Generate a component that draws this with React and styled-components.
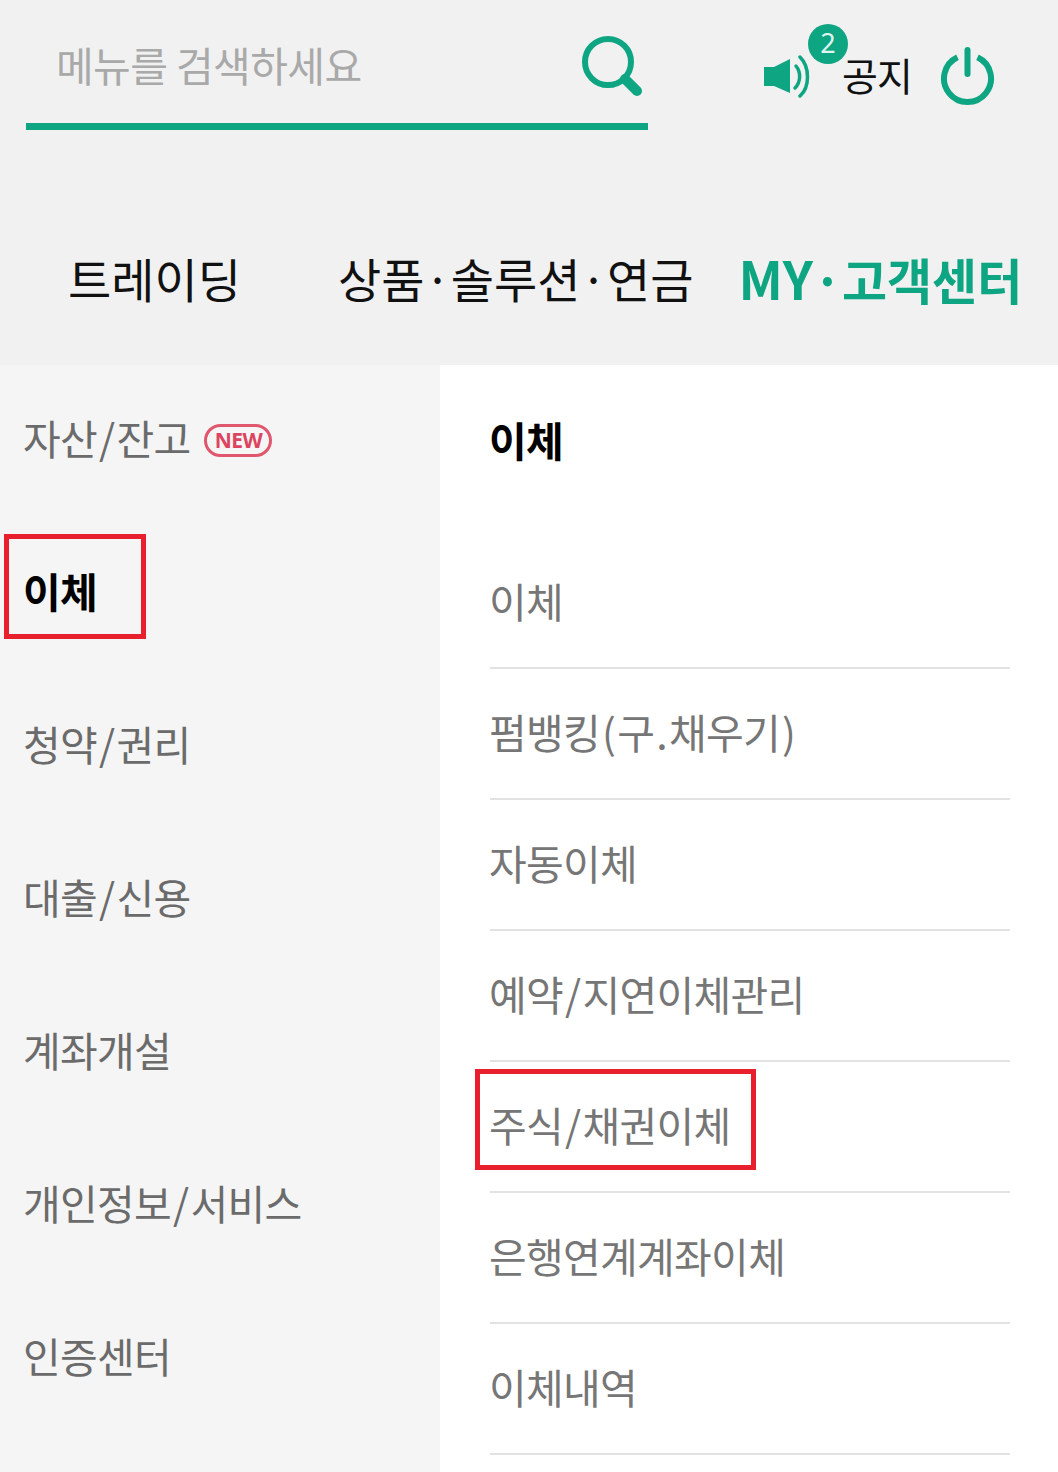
import React from "react";
import styled, { createGlobalStyle } from "styled-components";

const green = "#0ea583";

const Global = createGlobalStyle`
  html, body { margin: 0; padding: 0; background: #fff; }
  body { font-family: "Noto Sans CJK KR", "Noto Sans", sans-serif; overflow: hidden; }
`;
const Page = styled.div`
  width: 1058px; height: 1472px; overflow: hidden; display: flex; flex-direction: column;
`;
const Header = styled.header`
  height: 365px; flex: none; background: #f1f1f1; display: flex; flex-direction: column;
`;
const TopRow = styled.div`
  display: flex; align-items: flex-start; height: 130px; padding-left: 26px;
`;
const SearchBar = styled.div`
  width: 622px; height: 130px; box-sizing: border-box; border-bottom: 7px solid ${green};
  display: flex; align-items: flex-start; justify-content: space-between; padding: 34px 3px 0 30px;
`;
const SearchText = styled.span`
  font-size: 41px; line-height: 60px; letter-spacing: -0.6px; color: #a9a9a9;
`;
const NoticeArea = styled.div`
  display: flex; align-items: flex-start; margin-left: 115px; padding-top: 24px; position: relative;
`;
const Speaker = styled.div`
  position: relative; width: 79px; height: 76px;
`;
const Badge = styled.span`
  position: absolute; left: 45px; top: 0; width: 40px; height: 40px; border-radius: 50%;
  background: ${green}; color: #dff5ef; font-size: 27px; line-height: 38px; text-align: center;
  font-family: "Noto Sans", sans-serif;
`;
const NoticeLabel = styled.span`
  font-size: 39px; line-height: 58px; margin-top: 21px; color: #111; letter-spacing: -1px;
`;
const PowerWrap = styled.div`
  margin-left: 28px; margin-top: 23px; height: 60px;
`;
const Tabs = styled.nav`
  display: flex; align-items: center; margin-top: 111px; height: 74px;
`;
const Tab = styled.span`
  font-size: ${p => p.$size || 47}px; line-height: 74px; white-space: nowrap; flex: none;
  color: ${p => (p.$active ? green : "#111")};
  font-weight: ${p => (p.$active ? 700 : 400)};
  margin-left: ${p => p.$ml}px;
`;
const TabLatin = styled.span`
  font-size: 52px;
`;
const Body = styled.div`
  flex: 1; display: flex; min-height: 0;
`;
const Sidebar = styled.aside`
  width: 440px; flex: none; background: #f5f5f5; padding: 0 0 0 23px; box-sizing: border-box;
  display: flex; flex-direction: column; position: relative;
`;
const SideItem = styled.div`
  height: 153px; flex: none; box-sizing: border-box; padding-bottom: 10px;
  display: flex; align-items: center; gap: 14px;
  font-size: 41px; letter-spacing: -0.7px; white-space: nowrap;
  color: ${p => (p.$active ? "#000" : "#6b6b6b")};
  font-weight: ${p => (p.$active ? 700 : 400)};
`;
const NewTag = styled.span`
  width: 68px; height: 33px; box-sizing: border-box; border: 3px solid #e0566c; border-radius: 17px;
  color: #dc4560; font: 700 21px/27px "Noto Sans", sans-serif; letter-spacing: -0.5px; text-align: center;
  margin-top: 8px;
`;
const Content = styled.main`
  flex: 1; background: #fff; padding: 0 48px 0 50px; display: flex; flex-direction: column; position: relative;
`;
const SectionTitle = styled.h2`
  margin: 0; height: 173px; flex: none; box-sizing: border-box; padding-top: 39px;
  font-size: 41px; line-height: 70px; font-weight: 700; color: #000; letter-spacing: -0.7px; text-indent: -1px;
`;
const MenuRow = styled.div`
  height: 131px; flex: none; box-sizing: border-box; border-bottom: 2px solid #e2e2e2;
  font-size: 41px; line-height: 124px; color: #767676; letter-spacing: -0.7px; white-space: nowrap; text-indent: -1px;
`;
const Punct = styled.span`
  margin: 0 2px;
`;
const Mark = styled.div`
  position: absolute; box-sizing: border-box; border: 5px solid #e8202e; pointer-events: none;
  left: ${p => p.$x}px; top: ${p => p.$y}px; width: ${p => p.$w}px; height: ${p => p.$h}px;
`;

const SearchIcon = () => (
  <svg width="66" height="66" viewBox="0 0 66 66" fill="none" stroke={green}>
    <circle cx="29" cy="28" r="23" strokeWidth="6" />
    <path d="M46 45 L58 57" strokeWidth="10" strokeLinecap="round" />
  </svg>
);
const SpeakerIcon = () => (
  <svg width="50" height="44" viewBox="0 0 50 44" fill="none" style={{ position: "absolute", left: 1, top: 31 }}>
    <path d="M0 12H10L26 4V38L10 31H0Z" fill={green} />
    <path d="M32 11C37 17 37 27 31 33" stroke={green} strokeWidth="3.500" strokeLinecap="round" />
    <path d="M36 2C46 12 46 32 36 41" stroke={green} strokeWidth="3.500" strokeLinecap="round" />
  </svg>
);
const PowerIcon = () => (
  <svg width="56" height="60" viewBox="0 0 56 60" fill="none" stroke={green} strokeLinecap="round">
    <path d="M17.500 10.200A23.500 23.500 0 1 0 37.500 10.200" strokeWidth="6" strokeLinecap="butt" />
    <path d="M27.500 3V27" strokeWidth="6" />
  </svg>
);

const withPunct = text =>
  text.split(/([/().])/).map((part, i) =>
    /^[/().]$/.test(part) ? <Punct key={i}>{part}</Punct> : part
  );

const side = ["자산/잔고", "이체", "청약/권리", "대출/신용", "계좌개설", "개인정보/서비스", "인증센터"];
const menu = ["이체", "펌뱅킹(구.채우기)", "자동이체", "예약/지연이체관리", "주식/채권이체", "은행연계계좌이체", "이체내역"];

export default function App() {
  return (
    <Page>
      <Global />
      <Header>
        <TopRow>
          <SearchBar>
            <SearchText>메뉴를 검색하세요</SearchText>
            <SearchIcon />
          </SearchBar>
          <NoticeArea>
            <Speaker>
              <SpeakerIcon />
              <Badge>2</Badge>
            </Speaker>
            <NoticeLabel>공지</NoticeLabel>
            <PowerWrap><PowerIcon /></PowerWrap>
          </NoticeArea>
        </TopRow>
        <Tabs>
          <Tab $ml={68}>트레이딩</Tab>
          <Tab $ml={97}>상품·솔루션·연금</Tab>
          <Tab $ml={45} $size={49} $active><TabLatin>MY</TabLatin>·고객센터</Tab>
        </Tabs>
      </Header>
      <Body>
        <Sidebar>
          {side.map((s, i) => (
            <SideItem key={s} $active={i === 1}>
              <span>{withPunct(s)}</span>
              {i === 0 && <NewTag>NEW</NewTag>}
            </SideItem>
          ))}
          <Mark $x={4} $y={169} $w={142} $h={105} />
        </Sidebar>
        <Content>
          <SectionTitle>이체</SectionTitle>
          {menu.map(m => <MenuRow key={m}>{withPunct(m)}</MenuRow>)}
          <Mark $x={35} $y={704} $w={281} $h={101} />
        </Content>
      </Body>
    </Page>
  );
}
